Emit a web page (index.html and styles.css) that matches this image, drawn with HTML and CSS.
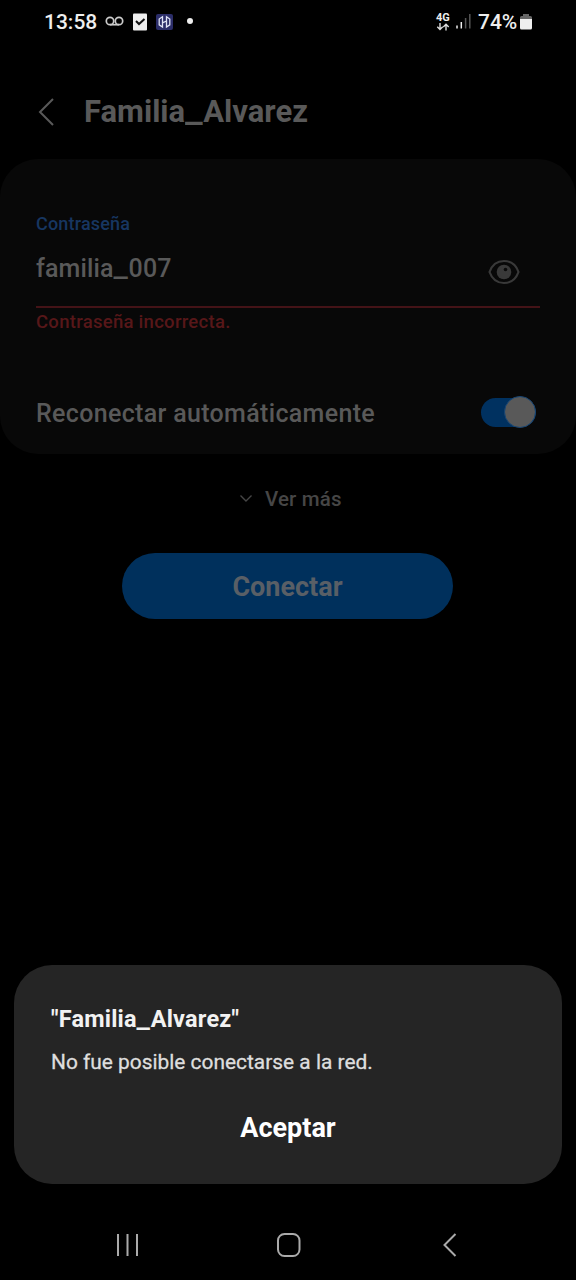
FILE: index.html
```html
<!DOCTYPE html>
<html lang="es">
<head>
<meta charset="utf-8">
<title>Familia_Alvarez</title>
<link rel="stylesheet" href="styles.css">
</head>
<body>
<div class="screen">
  <div class="status">
    <span class="clock">13:58</span>
    <svg class="voicemail" width="20" height="12" viewBox="0 0 20 12"><circle cx="5" cy="5" r="3.7"/><circle cx="14" cy="5" r="3.7"/><path d="M5 8.700h9"/></svg>
    <svg class="task" width="14" height="18" viewBox="0 0 14 18"><rect width="14" height="17" y="0.500" rx="1" fill="#eee"/><path d="M3 8l3 3L11.500 6" fill="none" stroke="#111" stroke-width="2"/></svg>
    <svg class="app" width="17" height="17" viewBox="0 0 17 17"><rect width="17" height="16" rx="2" fill="#2b2d68"/><path d="M6.500 2.800L3.200 5v5.800l3.300 2.200zM10.500 2.800L13.800 5v5.800L10.500 13zM6.500 8.800l4-1.800" fill="none" stroke="#dfe2f5" stroke-width="1.300"/></svg>
    <span class="dot"></span>
    <span class="network"><span class="gen">4G</span><svg width="14" height="8" viewBox="0 0 14 8"><path d="M4 0v6M1.300 3.700L4 6.400l2.700-2.700M10 7.500V1.500M7.300 4L10 1.300 12.700 4"/></svg></span>
    <svg class="signal" width="15" height="16" viewBox="0 0 15 16"><path d="M1 11.500V14.500" stroke="#eee"/><path d="M5.300 8v6.500" stroke="#eee"/><path d="M9.600 4v10.500M13.800 0v14.500" stroke="#555"/></svg>
    <span class="percent">74%</span>
    <svg class="battery" width="12" height="17" viewBox="0 0 12 17"><path d="M3 0h6v2h1.500Q12 2 12 3.500V6H0V3.500Q0 2 1.500 2H3z" fill="#666"/><path d="M0 5h12v9q0 1.500-1.500 1.500h-9Q0 15.500 0 14z" fill="#eee"/></svg>
  </div>
  <header class="header">
    <svg width="17" height="30" viewBox="0 0 17 30"><path d="M15 2L2 15l13 13"/></svg>
    <h1>Familia<span class="underscore">_</span>Alvarez</h1>
  </header>
  <main>
    <section class="card">
      <div class="label">Contraseña</div>
      <div class="field">
        <span class="password">familia<span class="underscore">_</span>007</span>
        <svg width="32" height="26" viewBox="0 0 32 26"><path d="M1.500 13C4 6 9.500 2 16 2s12 4 14.500 11C28 20 22.500 24 16 24S4 20 1.500 13z" fill="none" stroke="#393939" stroke-width="2.200"/><circle cx="16" cy="13" r="7.300" fill="#393939"/><circle cx="17.500" cy="10.500" r="1.800" fill="#0a0a0a"/></svg>
      </div>
      <div class="error">Contraseña incorrecta.</div>
      <div class="reconnect"><span class="reconnect-label">Reconectar automáticamente</span><span class="toggle"><span class="knob"></span></span></div>
    </section>
    <div class="more"><svg width="14" height="9" viewBox="0 0 14 9"><path d="M1.500 1.500L7 7l5.500-5.500"/></svg><span>Ver más</span></div>
    <button class="connect">Conectar</button>
  </main>
  <section class="dialog">
    <h2>"Familia<span class="underscore">_</span>Alvarez"</h2>
    <p>No fue posible conectarse a la red.</p>
    <button class="accept">Aceptar</button>
  </section>
  <nav class="nav">
    <svg width="24" height="26" viewBox="0 0 24 26"><path d="M2 2v22M11.500 2v22M21 2v22"/></svg>
    <svg width="26" height="26" viewBox="0 0 26 26"><rect x="2" y="2" width="21.500" height="22" rx="6.500"/></svg>
    <svg width="16" height="26" viewBox="0 0 16 26"><path d="M13.500 2L2.500 13l11 11"/></svg>
  </nav>
</div>
</body>
</html>
```
FILE: styles.css
```css
* { box-sizing: border-box; }
body { margin: 0; background: #000; font-family: Roboto, "Liberation Sans", sans-serif; font-weight: 500; }
h1, h2, p { margin: 0; }
button { border: 0; padding: 0; font-family: inherit; }
svg { display: block; flex: none; }
.screen { width: 576px; height: 1280px; display: flex; flex-direction: column; overflow: hidden; white-space: nowrap; }
.underscore { display: inline-block; transform: scaleX(1.28); margin: 0 .07em; }
.status { height: 44px; padding: 0 44px 0 44px; display: flex; align-items: center; color: #eee; }
.clock { width: 61px; font-size: 21px; line-height: 44px; }
.voicemail { fill: none; stroke: #ccc; stroke-width: 1.700; }
.task { margin-left: 8px; margin-bottom: 1px; }
.app { margin-left: 9px; }
.dot { width: 6px; height: 6px; margin: 0 0 2px 14px; border-radius: 50%; background: #eee; }
.network { width: 15px; margin-left: auto; }
.gen { display: block; font-size: 11px; line-height: 10px; font-weight: 700; }
.network svg { fill: none; stroke: #ddd; stroke-width: 1.400; }
.signal { margin-left: 5px; fill: none; stroke-width: 1.500; }
.percent { width: 42px; margin-left: 7px; font-size: 21px; line-height: 44px; }
.header { height: 115px; padding: 21px 38px 0; display: flex; align-items: center; gap: 29px; }
.header svg { fill: none; stroke: #595959; stroke-width: 2; }
.header h1 { font-size: 31px; line-height: 36px; font-weight: 700; color: #595959; }
.card { height: 295px; padding: 53px 36px 0; border-radius: 38px; background: #080808; }
.label { font-size: 18px; line-height: 24px; letter-spacing: .18px; color: #173661; }
.field { height: 72px; display: flex; justify-content: space-between; align-items: flex-start; padding: 16px 20px 0 0; border-bottom: 2px solid #441317; }
.password { padding-top: 1px; font-size: 25px; line-height: 32px; letter-spacing: .15px; color: #595959; }
.field svg { margin-top: 7px; }
.error { font-size: 18.5px; line-height: 29px; letter-spacing: .28px; color: #571719; }
.reconnect { display: flex; justify-content: space-between; align-items: center; height: 34px; margin-top: 59px; padding-right: 4px; }
.reconnect-label { padding-top: 1px; font-size: 25px; line-height: 34px; letter-spacing: .33px; color: #595959; }
.toggle { width: 55px; height: 29px; margin-bottom: 2px; display: flex; justify-content: flex-end; align-items: center; border-radius: 15px; background: #003160; }
.knob { width: 32px; height: 32px; flex: none; border-radius: 50%; background: #595959; border: 1px solid #164574; }
.more { height: 99px; padding: 0 235px 10px 239px; display: flex; align-items: center; gap: 12px; font-size: 20.5px; letter-spacing: .15px; color: #464646; }
.more svg { fill: none; stroke: #464646; stroke-width: 1.400; }
.connect { display: block; width: 331px; height: 66px; margin: 0 auto 0 122px; padding-top: 1px; border-radius: 33px; background: #00305c; color: #595f66; font-size: 27px; line-height: 66px; font-weight: 700; }
.dialog { width: 548px; height: 219px; margin: auto 0 0 14px; padding: 38px 37px 0; border-radius: 38px; background: #252525; color: #f2f2f2; display: flex; flex-direction: column; }
.dialog h2 { font-size: 23.5px; line-height: 32px; font-weight: 700; letter-spacing: .2px; }
.dialog p { margin-top: 10px; padding-top: 1px; font-size: 20.9px; line-height: 32px; font-weight: 400; color: #dedede; -webkit-text-stroke: .3px #dedede; }
.accept { height: 40px; margin-top: 30px; background: none; color: #fff; font-size: 27px; line-height: 40px; font-weight: 700; }
.nav { height: 96px; padding: 26px 118px 0 116px; display: flex; justify-content: space-between; align-items: center; }
.nav svg { fill: none; stroke: #aaa; stroke-width: 2; }
.nav svg:nth-child(2) { margin-right: 5px; }
```
